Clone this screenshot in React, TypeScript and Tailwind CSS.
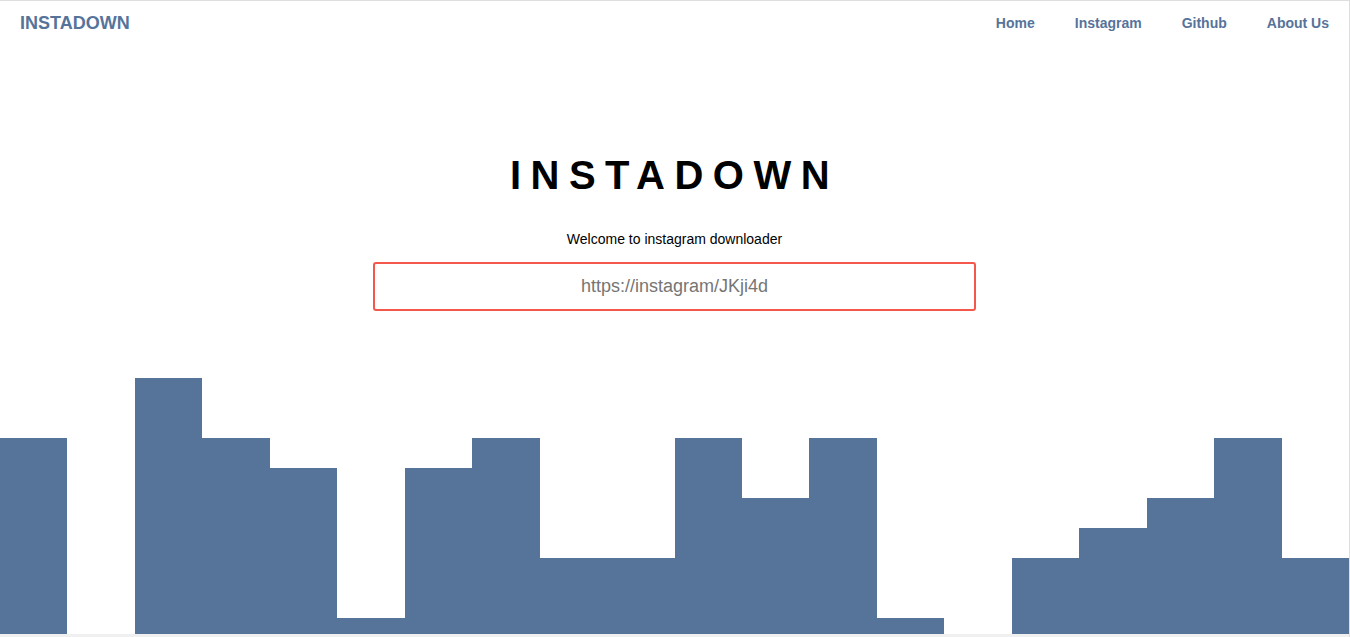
const tops = [60, 256, 0, 60, 90, 240, 90, 60, 180, 180, 60, 120, 60, 240, 256, 180, 150, 120, 60, 180];

function Skyline() {
  const w = 1350 / tops.length;
  let d = 'M0 256';
  tops.forEach((t, i) => {
    d += ` V${t} H${(i + 1) * w}`;
  });
  d += ' V256 Z';
  return (
    <svg className="block w-full h-[256px]" viewBox="0 0 1350 256" preserveAspectRatio="none">
      <path d={d} fill="#567399" shapeRendering="crispEdges" />
    </svg>
  );
}

export default function App() {
  const links = ['Home', 'Instagram', 'Github', 'About Us'];

  return (
    <div className="h-[637px] w-full flex flex-col overflow-hidden bg-white border-t border-r border-[#dedede] font-['Liberation_Sans',Arial,sans-serif]">
      <nav className="h-[44px] flex items-center justify-between shrink-0">
        <a className="px-5 text-[18px] font-bold text-[#56739a]">INSTADOWN</a>
        <ul className="flex items-center">
          {links.map((l) => (
            <li key={l} className="px-5 text-[14px] font-bold text-[#56739a]">
              {l}
            </li>
          ))}
        </ul>
      </nav>

      <main className="flex-1 flex flex-col items-center">
        <h1 className="mt-[107px] text-[40px] leading-[46px] font-bold tracking-[9.5px] text-black">
          INSTADOWN
        </h1>
        <p className="mt-[33px] text-[14px] leading-4 text-black">Welcome to instagram downloader</p>
        <input
          type="text"
          placeholder="https://instagram/JKji4d"
          className="mt-[15px] w-[603px] h-[49px] border-2 border-[#f4574c] rounded-[3px] text-center text-[18px] outline-none placeholder:text-[#757575]"
        />
      </main>

      <Skyline />
      <div className="h-[3px] shrink-0 bg-[#f0f0f0]" />
    </div>
  );
}
